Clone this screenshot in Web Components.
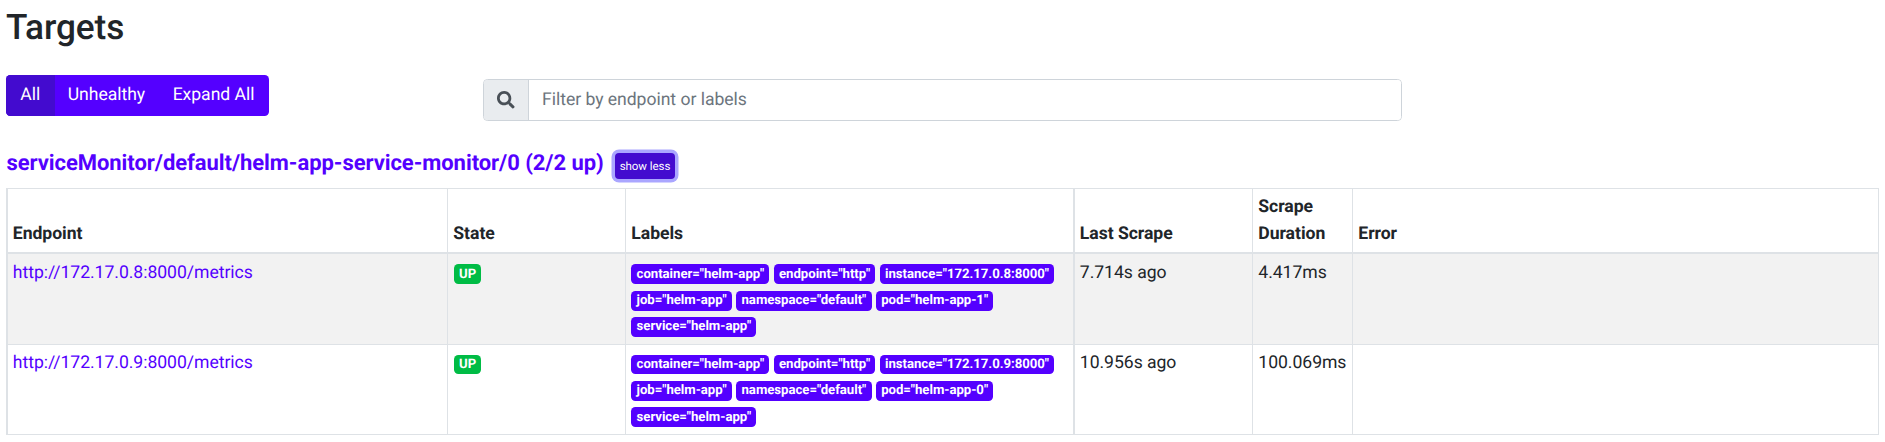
<!DOCTYPE html>
<html lang="en">
<head>
<meta charset="utf-8">
<title>Targets</title>
<style>
  html, body { margin: 0; background: #fff; }
  body { font: 400 17.6px/26.4px Roboto, "Liberation Sans", sans-serif; letter-spacing: -.04px; color: #212529; text-rendering: geometricPrecision; }
</style>
</head>
<body>
<targets-page></targets-page>
<script>
const define = (name, html, setup) => {
  const t = document.createElement('template');
  t.innerHTML = html;
  customElements.define(name, class extends HTMLElement {
    connectedCallback() {
      if (this.shadowRoot) return;
      this.attachShadow({ mode: 'open' }).append(t.content.cloneNode(true));
      if (setup) setup(this, this.shadowRoot);
    }
  });
};

define('label-badge', `
<style>
  :host { display: inline-block; background: #5400ff; color: #fff; font-size: 13.2px; font-weight: 700; letter-spacing: -.04px;
    line-height: 1; padding: 3.3px 5.28px; border-radius: 4.4px; margin-right: 4.4px; white-space: nowrap; vertical-align: baseline; }
  :host([kind="up"]) { background: #00bc45; text-transform: uppercase; margin-left: .5px; }
</style><slot></slot>`);

define('filter-buttons', `
<style>
  :host { display: flex; width: 263px; height: 41px; border-radius: 4.4px; overflow: hidden; background: #5400ff; }
  button { all: unset; box-sizing: border-box; color: #fff; font: inherit; padding: 0 14.3px; line-height: 37px; white-space: nowrap; }
  button + button { margin-left: -1.1px; }
  .active { background: #430bcf; }
</style>
<button class="active">All</button><button>Unhealthy</button><button>Expand All</button>`);

define('search-field', `
<style>
  :host { display: flex; box-sizing: border-box; width: 919px; height: 42px; border: 1px solid #ced4da; border-radius: 4.4px; overflow: hidden; }
  .icon { box-sizing: border-box; width: 45px; background: #e9ecef; border-right: 1px solid #ced4da; display: grid; place-items: center; color: #495057; }
  svg { display: block; width: 17.6px; height: 17.6px; }
  input { flex: 1; border: 0; outline: 0; padding: 0 13px; margin: 0; font: inherit; letter-spacing: inherit; text-rendering: inherit; color: #495057; background: #fff; }
  input::placeholder { color: #6c757d; opacity: 1; }
</style>
<span class="icon"><svg viewBox="0 0 512 512"><path fill="currentColor" d="M505 442.7L405.3 343c-4.500-4.500-10.600-7-17-7H372c27.600-35.300 44-79.700 44-128C416 93.100 322.900 0 208 0S0 93.100 0 208s93.100 208 208 208c48.300 0 92.700-16.400 128-44v16.300c0 6.400 2.500 12.500 7 17l99.700 99.700c9.400 9.400 24.600 9.400 33.900 0l28.300-28.300c9.400-9.400 9.400-24.600.1-34zM208 336c-70.700 0-128-57.200-128-128 0-70.700 57.200-128 128-128 70.700 0 128 57.200 128 128 0 70.700-57.200 128-128 128z"/></svg></span>
<input type="text" placeholder="Filter by endpoint or labels">`);

define('pool-heading', `
<style>
  :host { display: grid; grid-template-columns: 609px 60px; align-items: start; height: 39px; }
  a { color: #5400ff; font-size: 22px; font-weight: 700; letter-spacing: -.065px; line-height: 26.4px; white-space: nowrap; margin-top: 2px; padding-left: .5px; }
  button { all: unset; box-sizing: border-box; width: 60px; height: 26px; margin-top: 4px; border-radius: 4px; background: #430bcf;
    box-shadow: 0 0 0 3.5px #aaa6ff; color: #fff; font: 400 11.5px/26px Roboto, sans-serif; text-rendering: geometricPrecision; text-align: center; white-space: nowrap; }
</style>
<a>serviceMonitor/default/helm-app-service-monitor/0 (2/2 up)</a><button>show less</button>`);

define('target-row', `
<style>
  :host { display: grid; grid-template-columns: 441px 178px 448px 179px 100px 527px; box-sizing: border-box;
    height: var(--h, 91px); border-bottom: 1px solid #dee2e6; }
  :host([striped]) { background: #f2f2f2; }
  :host([head]) { font-weight: 700; line-height: 27px; border-top: 1px solid #dee2e6; border-bottom-width: 2px; align-items: stretch; }
  .c { box-sizing: border-box; border-left: 1px solid #dee2e6; padding: var(--pt, 5.6px) 5px 0 5.3px; }
  .w { border-left-width: 2px; padding-left: 4.8px; }
  .c:last-child { border-right: 1px solid #dee2e6; }
  :host([head]) .c { display: flex; align-items: flex-end; padding-top: 0; padding-bottom: 4px; }
</style>
<div class="c w"><slot name="endpoint"></slot></div><div class="c"><slot name="state"></slot></div>
<div class="c"><slot name="labels"></slot></div><div class="c w"><slot name="last"></slot></div>
<div class="c"><slot name="duration"></slot></div><div class="c"><slot name="error"></slot></div>`);

define('targets-table', `
<style>
  :host { display: block; width: 1873px; }
  a { color: #5400ff; }
  .head { --h: 66px; } .last { --h: 90px; --pt: 4.9px; }
</style>
<target-row head class="head"><span slot="endpoint">Endpoint</span><span slot="state">State</span><span slot="labels">Labels</span><span slot="last">Last Scrape</span><span slot="duration">Scrape Duration</span><span slot="error">Error</span></target-row>`,
(host, root) => {
  const rows = [
    ['172.17.0.8:8000', 'helm-app-1', '7.714s ago', '4.417ms'],
    ['172.17.0.9:8000', 'helm-app-0', '10.956s ago', '100.069ms']
  ];
  rows.forEach(([addr, pod, last, dur], i) => {
    const labels = { container: 'helm-app', endpoint: 'http', instance: addr, job: 'helm-app', namespace: 'default', pod, service: 'helm-app' };
    const row = document.createElement('target-row');
    if (i === 0) row.setAttribute('striped', ''); else row.className = 'last';
    row.innerHTML = `<a slot="endpoint">http://${addr}/metrics</a><label-badge slot="state" kind="up">UP</label-badge>` +
      `<span slot="labels">${Object.entries(labels).map(([k, v]) => `<label-badge>${k}="${v}"</label-badge>`).join('<wbr>')}</span>` +
      `<span slot="last">${last}</span><span slot="duration">${dur}</span>`;
    root.append(row);
  });
});

define('targets-page', `
<style>
  :host { display: block; box-sizing: border-box; padding: 6px 0 0 6px; width: 1885px; height: 442px; overflow: hidden; }
  h2 { margin: 0; font-size: 35.2px; font-weight: 500; letter-spacing: -.1px; line-height: 42px; height: 69px; }
  .bar { display: flex; height: 74px; }
  search-field { margin: 4px 0 0 214px; }
</style>
<h2>Targets</h2>
<div class="bar"><filter-buttons></filter-buttons><search-field></search-field></div>
<pool-heading></pool-heading>
<targets-table></targets-table>`);
</script>
</body>
</html>
